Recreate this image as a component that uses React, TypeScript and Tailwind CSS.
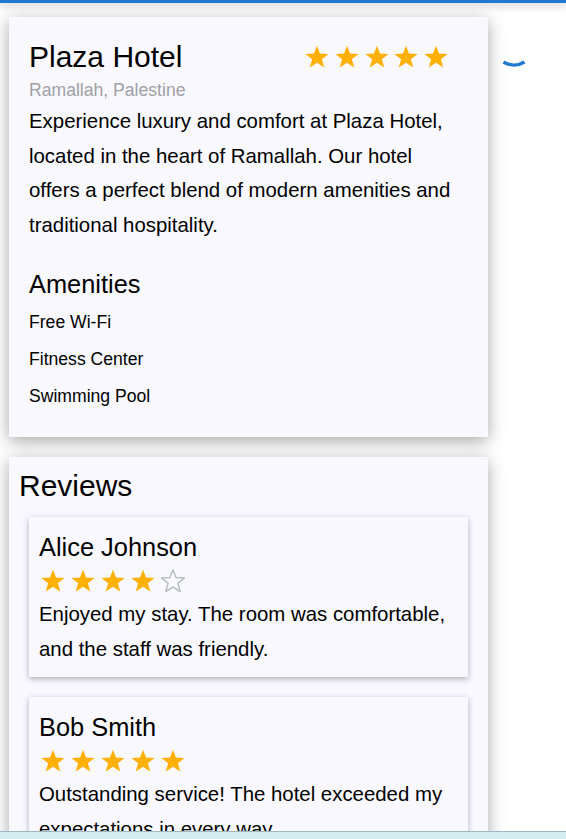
import React from "react";

const font = { fontFamily: '"Liberation Sans", Arial, sans-serif' };

function Star({ filled }: { filled: boolean }) {
  return (
    <svg width="24" height="24" viewBox="0 0 24 24" className="block">
      <polygon
        points="12,0.8 15,8.5 23.6,8.9 16.9,14.2 19.2,22.6 12,17.8 4.8,22.6 7.1,14.2 0.4,8.9 9,8.5"
        fill={filled ? "#ffb000" : "none"}
        stroke={filled ? "none" : "#b8b8c0"}
        strokeWidth="1.4"
        strokeLinejoin="round"
      />
    </svg>
  );
}

function Stars({ n, gap }: { n: number; gap: string }) {
  return (
    <div className={`flex ${gap}`}>
      {[1, 2, 3, 4, 5].map((i) => (
        <Star key={i} filled={i <= n} />
      ))}
    </div>
  );
}

const reviews = [
  { name: "Alice Johnson", rating: 4, text: "Enjoyed my stay. The room was comfortable, and the staff was friendly." },
  { name: "Bob Smith", rating: 5, text: "Outstanding service! The hotel exceeded my expectations in every way." },
];

export default function App() {
  return (
    <div style={font} className="min-h-screen bg-white text-black">
      {/* top bar */}
      <div className="h-[3px] bg-[#1e78d2] shadow-[0_2px_8px_rgba(0,0,0,0.35)] relative z-10" />

      <div className="flex">
        <div className="w-[479px] ml-[9px] pt-[14px]">
          {/* hotel card */}
          <div className="bg-[#f8f8fe] shadow-[0_4px_16px_rgba(0,0,0,0.35)] px-5 pt-[23px] pb-[22px]">
            <div className="flex items-center justify-between">
              <h1 className="text-[30px] leading-[34px]">Plaza Hotel</h1>
              <div className="mr-5">
                <Stars n={5} gap="gap-[5.75px]" />
              </div>
            </div>
            <p className="text-[17.6px] text-[#a0a0a6] mt-[6px] leading-[20px]">Ramallah, Palestine</p>
            <p className="text-[20.4px] leading-[34.7px] mt-[4px]">
              Experience luxury and comfort at Plaza Hotel, located in the heart of Ramallah. Our hotel offers a
              perfect blend of modern amenities and traditional hospitality.
            </p>
            <h2 className="text-[25.4px] leading-[28px] mt-[27px]">Amenities</h2>
            <ul className="text-[17.6px] leading-[37px] mt-[6px]">
              <li>Free Wi-Fi</li>
              <li>Fitness Center</li>
              <li>Swimming Pool</li>
            </ul>
          </div>

          {/* reviews card */}
          <div className="bg-[#f8f8fe] shadow-[0_4px_16px_rgba(0,0,0,0.35)] mt-5 p-[10px]">
            <h2 className="text-[30px] leading-[34px] mt-[2px]">Reviews</h2>
            <div className="flex flex-col gap-5 mt-[14px] mx-[10px]">
              {reviews.map((r) => (
                <div key={r.name} className="bg-[#f8f8fe] shadow-[0_2px_6px_rgba(0,0,0,0.3)] px-[10px] pt-[17px] pb-[10px]">
                  <h3 className="text-[25.4px] leading-[26px]">{r.name}</h3>
                  <div className="mt-[9px] ml-[2px]">
                    <Stars n={r.rating} gap="gap-[6px]" />
                  </div>
                  <p className="text-[20.4px] leading-[35px] mt-[4px]">{r.text}</p>
                </div>
              ))}
            </div>
          </div>
        </div>

        {/* loading spinner */}
        <div className="ml-[2px] pt-[17px]">
          <svg width="48" height="48" viewBox="0 0 48 48">
            <path d="M13.5 42 A20 20 0 0 0 34.5 42" fill="none" stroke="#1e78d2" strokeWidth="3.4" />
          </svg>
        </div>
      </div>

      <div className="fixed bottom-0 left-0 right-0 h-[8px] bg-[#d2ecf0] border-t border-[#9fb8c0]" />
    </div>
  );
}
